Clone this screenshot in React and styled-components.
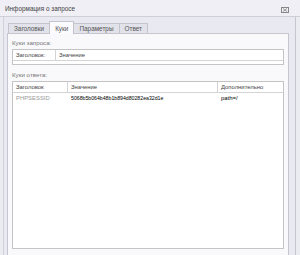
import React from "react";
import styled, { createGlobalStyle } from "styled-components";

const GlobalStyle = createGlobalStyle`
  html, body {
    margin: 0;
    padding: 0;
    background: #ebebf2;
  }
  body {
    font-family: "Liberation Sans", Arial, sans-serif;
    font-size: 7px;
    color: #333;
  }
`;

/** styled component */
const Window = styled.div`
  width: 300px;
  height: 255px;
  background: #ebebf2;
  display: flex;
  flex-direction: column;
  overflow: hidden;
`;

const TitleBar = styled.div`
  height: 16px;
  display: flex;
  align-items: center;
  justify-content: space-between;
  padding: 0 11px 0 5px;
  border-bottom: 1px solid #cfcfd8;
  background: #efeff5;
  color: #444;
  font-size: 6.4px;
`;

const CloseIcon = styled.span`
  display: flex;
  margin-top: 4px;
`;

const Frame = styled.div`
  flex: 1;
  display: flex;
  flex-direction: column;
  margin: 0 4px 0 3px;
  padding: 4px 6px 0 3px;
  border-left: 1px solid #d2d2da;
  border-right: 1px solid #c6c6ce;
  background: #e9e9f1;
`;

const TabStrip = styled.div`
  display: flex;
  align-items: flex-end;
  height: 12px;
  padding-left: 2px;
`;

const Tab = styled.div`
  height: ${(p) => (p.$active ? "12px" : "9px")};
  padding: 0 ${(p) => p.$pad}px;
  display: flex;
  align-items: center;
  border: 1px solid #c4c4cc;
  border-bottom: none;
  margin-left: -1px;
  background: ${(p) => (p.$active ? "#fbfbfd" : "#e2e2ea")};
  color: #555;
  font-size: 6.4px;
  position: relative;
  z-index: ${(p) => (p.$active ? 1 : 0)};
  margin-bottom: ${(p) => (p.$active ? "-1px" : "0")};
`;

const Panel = styled.div`
  flex: 1;
  display: flex;
  flex-direction: column;
  background: #f9f9fb;
  border: 1px solid #c6c6ce;
  border-bottom: none;
  padding: 5px 4px 0 4px;
`;

const Label = styled.div`
  color: #777;
  font-size: 6.2px;
  height: 8px;
  line-height: 8px;
  margin-bottom: 2px;
`;

const Table = styled.div`
  background: #fff;
  border: 1px solid #c4c4c4;
  display: flex;
  flex-direction: column;
  height: ${(p) => p.$height};
  flex: ${(p) => (p.$grow ? 1 : "none")};
  margin-bottom: 6px;
`;

const Row = styled.div`
  display: grid;
  grid-template-columns: ${(p) => p.$cols};
  height: 10px;
  border-bottom: ${(p) => (p.$head ? "1px solid #d4d4d4" : "none")};
`;

const Cell = styled.div`
  padding-left: 3px;
  display: flex;
  align-items: center;
  font-size: ${(p) => p.$size || "5.9px"};
  color: ${(p) => p.$color || "#444"};
  border-right: ${(p) => (p.$line ? "1px solid #d4d4d4" : "none")};
  white-space: nowrap;
  overflow: hidden;
`;

/** App */
const App = () => {
  return (
    <>
      <GlobalStyle />
      <Window>
        <TitleBar>
          <span>Информация о запросе</span>
          <CloseIcon>
            <svg width="8" height="6" viewBox="0 0 8 6">
              <rect x="0.5" y="0.5" width="7" height="5" fill="none" stroke="#888" />
              <path d="M2 1.5 L6 4.5 M6 1.5 L2 4.5" stroke="#888" strokeWidth="0.8" />
            </svg>
          </CloseIcon>
        </TitleBar>
        <Frame>
          <TabStrip>
            <Tab $pad={5}>Заголовки</Tab>
            <Tab $pad={5} $active>Куки</Tab>
            <Tab $pad={5}>Параметры</Tab>
            <Tab $pad={5}>Ответ</Tab>
          </TabStrip>
          <Panel>
            <Label>Куки запроса:</Label>
            <Table $height="14px">
              <Row $cols="43px 1fr" $head>
                <Cell $line>Заголовок:</Cell>
                <Cell>Значение</Cell>
              </Row>
            </Table>
            <Label>Куки ответа:</Label>
            <Table $grow>
              <Row $cols="55px 150px 1fr" $head>
                <Cell $line>Заголовок</Cell>
                <Cell $line>Значение</Cell>
                <Cell>Дополнительно</Cell>
              </Row>
              <Row $cols="55px 150px 1fr">
                <Cell $color="#999">PHPSESSID</Cell>
                <Cell $color="#000" $size="5.2px">5068b5b064b48b1b894d80282ea32d1e</Cell>
                <Cell $color="#000">path=/</Cell>
              </Row>
            </Table>
          </Panel>
        </Frame>
      </Window>
    </>
  );
};

export default App;
